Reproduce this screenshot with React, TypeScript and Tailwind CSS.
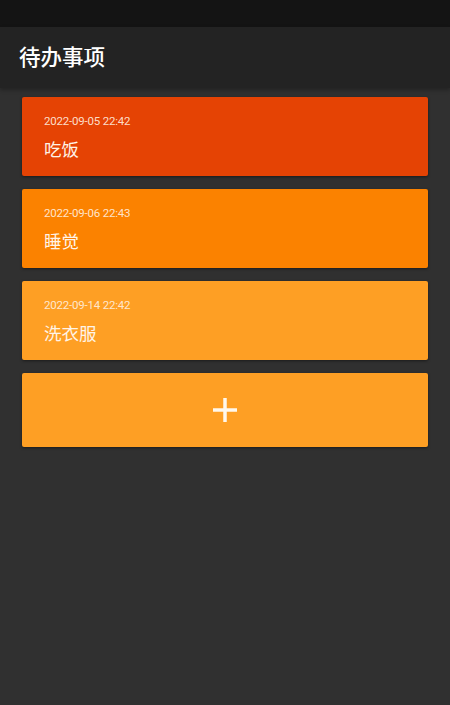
const todos = [
  { date: "2022-09-05 22:42", title: "吃饭", color: "bg-[#e54304]" },
  { date: "2022-09-06 22:43", title: "睡觉", color: "bg-[#fb8200]" },
  { date: "2022-09-14 22:42", title: "洗衣服", color: "bg-[#fe9f24]" },
];

const font = {
  fontFamily: 'Roboto, "Noto Sans CJK SC", sans-serif',
};

export default function App() {
  return (
    <div className="w-[450px] h-[705px] bg-[#303030] flex flex-col" style={font}>
      <div className="h-[27px] bg-[#141414] shrink-0" />
      <header className="h-[61px] bg-[#232323] shrink-0 flex items-center px-[19px] shadow-[0_2px_4px_rgba(0,0,0,0.3)]">
        <h1 className="text-[21.5px] text-white leading-none font-medium">待办事项</h1>
      </header>

      <main className="flex flex-col gap-[13px] px-[22px] pt-[9px]">
        {todos.map((t) => (
          <div
            key={t.date}
            className={`${t.color} h-[79px] rounded-[2px] shadow-[0_1px_3px_rgba(0,0,0,0.45)] px-[22px] pt-[2px] flex flex-col justify-center gap-[14px]`}
          >
            <span className="text-[11.5px] leading-none text-[#fff1e0]/90 tracking-[-0.2px]">{t.date}</span>
            <span className="text-[17.5px] leading-none text-[#fff4e8]">{t.title}</span>
          </div>
        ))}

        <button
          type="button"
          className="h-[74px] bg-[#fe9f24] rounded-[2px] shadow-[0_1px_3px_rgba(0,0,0,0.45)] flex items-center justify-center"
        >
          <svg width="24" height="24" viewBox="0 0 24 24" aria-hidden="true">
            <rect x="10.25" y="0" width="3.5" height="24" fill="#fff8ec" />
            <rect x="0" y="10.25" width="24" height="3.5" fill="#fff8ec" />
          </svg>
        </button>
      </main>
    </div>
  );
}
